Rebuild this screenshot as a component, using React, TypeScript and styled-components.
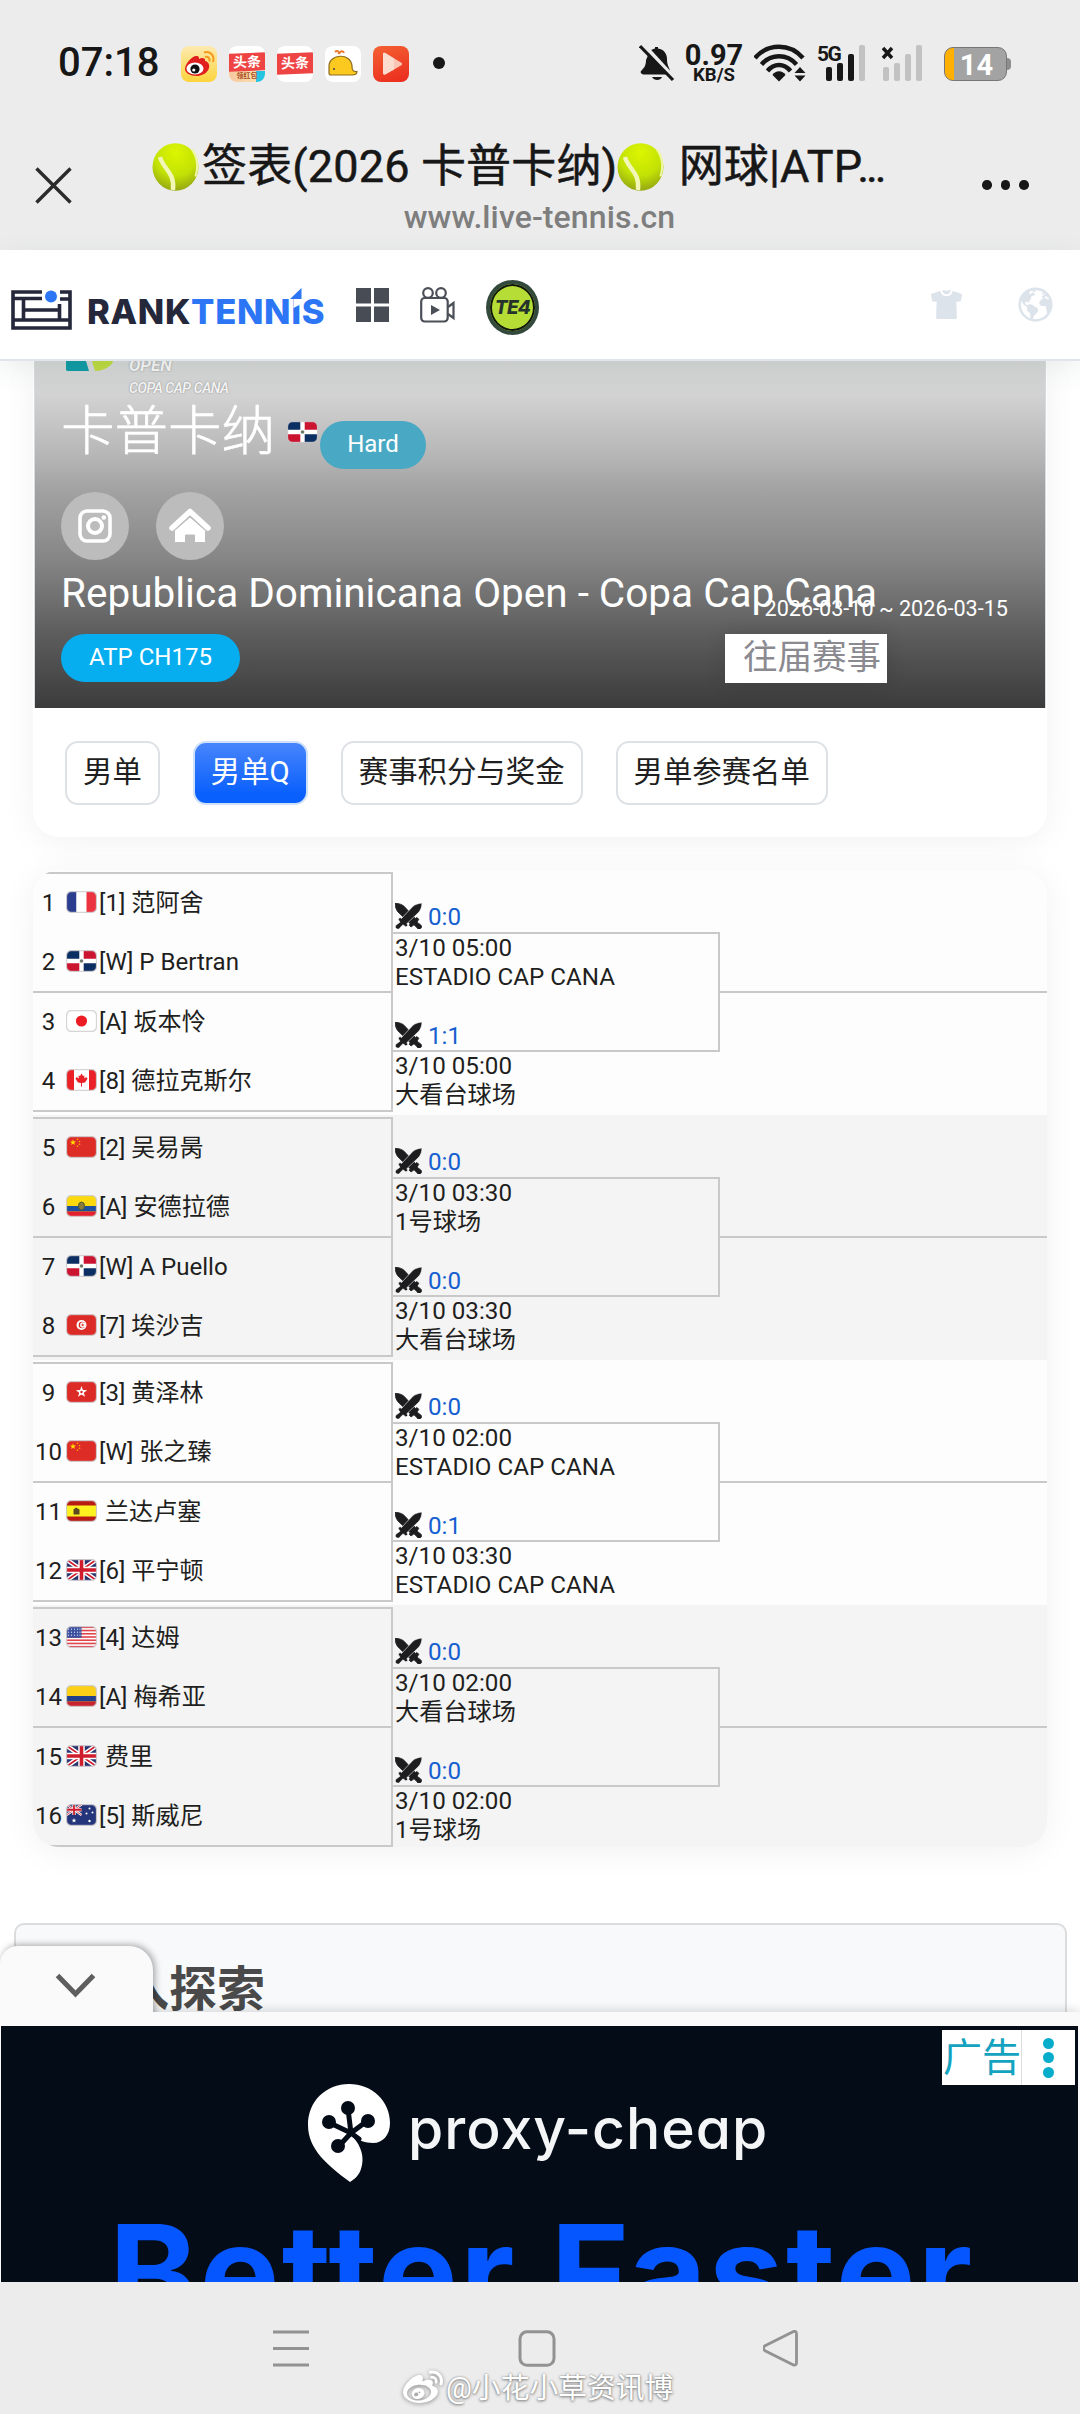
import React from "react";
import styled, { createGlobalStyle } from "styled-components";
import { FaWeibo } from "react-icons/fa";
import { IoEarth, IoShirt } from "react-icons/io5";

const sans = `Roboto, "Noto Sans CJK SC", sans-serif`;

const Global = createGlobalStyle`
  body { margin: 0; background: #fff; font-family: ${sans}; color: #1f1f21; }
  * { box-sizing: border-box; }
  svg { display: block; flex: none; }
`;

const Screen = styled.div`
  width: 1080px;
  height: 2414px;
  overflow: hidden;
  display: flex;
  flex-direction: column;
  background: #fff;
`;

/* ---------- system status bar ---------- */

const StatusBar = styled.div`
  height: 126px;
  flex: none;
  background: #ececec;
  display: flex;
  align-items: flex-start;
  padding: 0 73px 0 58px;
  color: #171717;
`;
const Clock = styled.div`
  width: 123px;
  padding-top: 39px;
  font-size: 40px;
  line-height: 47px;
  font-weight: 500;
`;
const AppIcons = styled.div`
  display: flex;
  gap: 12px;
  padding-top: 46px;
`;
const AppIcon = styled.div<{ $bg: string }>`
  width: 36px;
  height: 36px;
  border-radius: 8px;
  overflow: hidden;
  background: ${(p) => p.$bg};
`;
const HeadlineBand = styled.div<{ $promo?: boolean }>`
  margin-top: 7px;
  height: ${(p) => (p.$promo ? 18 : 21)}px;
  background: #ee4444;
  color: #fff;
  font-size: 14px;
  font-weight: 700;
  line-height: ${(p) => (p.$promo ? 18 : 21)}px;
  text-align: center;
  transform: skewY(-2deg);
`;
const PromoBand = styled.div`
  height: 12px;
  background: linear-gradient(90deg, #f6c8a0, #fbdcae 75%, #25c4e0 76%);
  color: #a8501c;
  font-size: 7px;
  font-weight: 700;
  line-height: 11px;
  text-align: center;
`;
const NotifDot = styled.div`
  width: 12px;
  height: 12px;
  border-radius: 50%;
  background: #171717;
  margin: 57px 0 0 24px;
`;
const StatusRight = styled.div`
  margin-left: auto;
  display: flex;
  padding-top: 44px;
`;
const Speed = styled.div`
  width: 60px;
  margin: -1px 10px 0 9px;
  text-align: center;
  font-weight: 700;
  line-height: 1;
`;
const SpeedValue = styled.div`
  font-size: 29px;
  line-height: 25px;
`;
const SpeedUnit = styled.div`
  font-size: 18.5px;
  line-height: 14px;
  font-weight: 700;
`;
const Signal = styled.div`
  position: relative;
  width: 50px;
  height: 38px;
`;
const SignalLabel = styled.span`
  position: absolute;
  left: 0;
  top: -2px;
  font-size: 21px;
  line-height: 24px;
  font-weight: 700;
  letter-spacing: -1.5px;
`;
const Battery = styled.div`
  position: relative;
  width: 63px;
  height: 34px;
  margin: 3px 0 0 20px;
  border: 1.5px solid #767676;
  border-radius: 9px;
  background: linear-gradient(90deg, #ffb000 9px, #a3a3a3 9px);
  color: #fff;
  font-size: 29px;
  font-weight: 700;
  line-height: 35px;
  text-align: center;
  padding-left: 2px;
  &::after {
    content: "";
    position: absolute;
    right: -5px;
    top: 10px;
    width: 4px;
    height: 12px;
    border-radius: 0 4px 4px 0;
    background: #8d8d8d;
  }
`;

/* ---------- browser title bar ---------- */

const TitleBar = styled.div`
  height: 124px;
  flex: none;
  background: #ececec;
  display: flex;
  align-items: flex-start;
  padding: 0 50px 0 35px;
`;
const CloseBox = styled.div`
  width: 117px;
  padding-top: 41px;
`;
const TitleText = styled.div`
  width: 775px;
  text-align: center;
`;
const PageTitle = styled.div`
  display: flex;
  align-items: center;
  height: 66px;
  padding-top: 15px;
  font-size: 45px;
  line-height: 54px;
  color: #171717;
  white-space: pre;
  -webkit-text-stroke: 0.5px #171717;
`;
const TitlePart = styled.span<{ $gap?: number }>`
  margin-left: ${(p) => p.$gap ?? 0}px;
  letter-spacing: 0.15px;
`;
const Ellipsis = styled.span`
  margin-left: -5px;
  letter-spacing: -3.2px;
`;
const PageUrl = styled.div`
  font-size: 32px;
  line-height: 38px;
  margin-top: 6px;
  font-weight: 500;
  letter-spacing: 0.1px;
  color: #7e7e7e;
`;
const MoreDots = styled.div`
  display: flex;
  gap: 9px;
  margin: 54px 0 0 55px;
  i {
    width: 9.5px;
    height: 9.5px;
    border-radius: 50%;
    background: #171717;
  }
`;

/* ---------- site header ---------- */

const SiteHeader = styled.header`
  height: 111px;
  flex: none;
  background: #fff;
  border-bottom: 2px solid #dfe5ea;
  display: flex;
  align-items: center;
  padding: 0 25px 0 11px;
  position: relative;
  z-index: 2;
  box-shadow: 0 8px 26px rgba(60, 80, 80, 0.1);
`;
const Court = styled.div`
  margin-top: 11px;
`;
const Brand = styled.div`
  position: relative;
  margin: 12px 0 0 15px;
  width: 242px;
  font-family: Inter, sans-serif;
  font-weight: 800;
  font-size: 34.6px;
  line-height: 40px;
  letter-spacing: 0.65px;
  color: #25273b;
  display: flex;
  span { color: #2c76f5; }
  svg { position: absolute; left: 203px; top: -3px; }
`;
const HeaderTools = styled.div`
  display: flex;
  align-items: center;
  margin-left: 27px;
  gap: 31px;
`;
const Te4 = styled.div`
  width: 53px;
  height: 55px;
  margin-top: 5px;
  border-radius: 50%;
  border: 4px solid #33493c;
  background: #b6dd35;
  box-shadow: inset 0 0 0 2px #10160c;
  color: #25332b;
  font: italic 800 19px/47px Inter, sans-serif;
  letter-spacing: -0.8px;
  text-align: center;
`;
const HeaderRight = styled.div`
  margin-left: auto;
  display: flex;
  align-items: center;
  gap: 53px;
  color: #dde3eb;
`;

/* ---------- page content ---------- */

const Content = styled.main`
  height: 1651px;
  flex: none;
  overflow: hidden;
  padding: 0 33px;
`;
const EventCard = styled.section`
  height: 476px;
  width: 1014px;
  border-radius: 0 0 26px 26px;
  background: #fff;
  box-shadow: 0 4px 34px rgba(0, 0, 0, 0.06);
`;
const Hero = styled.div`
  position: relative;
  height: 347px;
  margin: 0 1px;
  padding-left: 26px;
  border: solid #d5dce1;
  border-width: 0 1px;
  color: #fff;
  background: linear-gradient(180deg, #d5d8d7 0%, #d2d2d2 10%, #b4b4b4 28.5%, #a4a4a4 36%, #868686 57%, #5e5e5e 78%, #3b3b3b 100%);
`;
const LogoStrip = styled.div`
  height: 33px;
  display: flex;
  padding-left: 4px;
`;
const LogoText = styled.div`
  margin: -4px 0 0 14px;
  color: #f6f6f6;
  font-style: italic;
  text-shadow: 0 0 2px #888;
`;
const LogoOpen = styled.div`
  font-size: 17px;
  line-height: 17px;
  font-weight: 700;
`;
const LogoCopa = styled.div`
  font-size: 14px;
  line-height: 14px;
  margin-top: 7px;
  font-weight: 500;
  letter-spacing: -0.4px;
`;
const NameRow = styled.div`
  height: 98px;
  display: flex;
  align-items: flex-start;
`;
const CityName = styled.h1`
  margin: -1px 12px 0 1px;
  font-size: 53.5px;
  line-height: 78px;
  font-weight: 300;
  text-indent: -1px;
  -webkit-text-stroke: 0.6px #fff;
`;
const FlagSlot = styled.div`
  padding: 27px 2px 0 0;
`;
const Pill = styled.span<{ $bg: string; $w: number }>`
  display: block;
  width: ${(p) => p.$w}px;
  height: 48px;
  border-radius: 24px;
  background: ${(p) => p.$bg};
  font-size: 24px;
  line-height: 47px;
  text-align: center;
`;
const HardSlot = styled.div`
  padding-top: 27px;
`;
const Socials = styled.div`
  height: 68px;
  display: flex;
  gap: 27px;
`;
const SocialButton = styled.div`
  width: 68px;
  height: 68px;
  border-radius: 50%;
  background: #bcbcbc;
  display: grid;
  place-items: center;
`;
const EventTitle = styled.h2`
  margin: 0;
  height: 74px;
  font-size: 40.5px;
  font-weight: 400;
  line-height: 66px;
  white-space: nowrap;
`;
const EventDates = styled.div`
  position: absolute;
  right: 37px;
  top: 234px;
  font-size: 21.6px;
  line-height: 28px;
`;
const HeroFoot = styled.div`
  display: flex;
  justify-content: space-between;
  padding-right: 158px;
`;
const PastEvents = styled.div`
  width: 162px;
  height: 49px;
  padding-left: 18px;
  background: #fff;
  color: #8a8a90;
  font-size: 34.5px;
  line-height: 46px;
  white-space: nowrap;
  box-shadow: 0 0 20px rgba(0, 0, 0, 0.12);
`;
const Tabs = styled.nav`
  display: flex;
  gap: 33px;
  padding: 33px 0 0 32px;
`;
const Tab = styled.div<{ $active?: boolean }>`
  height: 64px;
  padding: 0 16px;
  border: 2px solid ${(p) => (p.$active ? "#cfe0fb" : "#dee2e6")};
  border-radius: 13px;
  font-size: 29.4px;
  line-height: 58px;
  white-space: nowrap;
  color: ${(p) => (p.$active ? "#fff" : "#1f1f21")};
  background: ${(p) => (p.$active ? "linear-gradient(180deg, #4785fb, #0a60fd 85%)" : "#fff")};
`;

/* ---------- draw ---------- */

const DrawCard = styled.section`
  width: 1014px;
  margin-top: 33px;
  border-radius: 26px;
  overflow: hidden;
`;
const DrawShadow = styled.div`
  border-radius: 26px;
  box-shadow: 0 4px 34px rgba(0, 0, 0, 0.06);
`;
const Quarter = styled.div<{ $odd: boolean; $last: boolean }>`
  display: grid;
  grid-template-columns: 360px 327px 1fr;
  height: ${(p) => (p.$last ? 242 : 245)}px;
  padding-top: 2px;
  background: ${(p) => (p.$odd ? "#f4f4f4" : "#fdfdfd")};
`;
const line = "2px solid #c9c9c9";
const Players = styled.div`
  height: 240px;
  border: ${line};
  border-left: none;
`;
const Pair = styled.div`
  height: 117px;
  & + & {
    height: 119px;
    border-top: ${line};
  }
`;
const Player = styled.div`
  height: 58.5px;
  display: flex;
  align-items: center;
  font-size: 24.1px;
  line-height: 28px;
  white-space: pre;
`;
const Seat = styled.span`
  width: 31px;
  text-align: center;
`;
const PlayerFlag = styled.span`
  margin: 0 2px 2px 2px;
`;
const Matches = styled.div`
  height: 240px;
  display: flex;
  flex-direction: column;
`;
const ScoreRow = styled.div<{ $first?: boolean }>`
  height: ${(p) => (p.$first ? 60 : 58)}px;
  display: flex;
  align-items: flex-end;
  gap: 6px;
  padding: 0 0 ${(p) => (p.$first ? 1 : 0)}px 2px;
  color: #165fd0;
  font-size: 24.2px;
  line-height: 28px;
  svg { margin-bottom: 2px; }
`;
const Bracket = styled.div`
  height: 120px;
  border: ${line};
  border-left: none;
`;
const Info = styled.div`
  padding-left: 2px;
  font-size: 24.2px;
  line-height: 29px;
  height: 58px;
  white-space: nowrap;
`;
const NextRound = styled.div`
  height: 121px;
  border-bottom: ${line};
`;

/* ---------- explore panel ---------- */

const Explore = styled.section`
  width: 1053px;
  height: 200px;
  margin: 76px 0 0 -19px;
  border: 2px solid #dadcde;
  border-radius: 10px;
  background: #f8f9fb;
  padding: 29px 0 0 57px;
  font-size: 48px;
  line-height: 72px;
  font-weight: 700;
  color: #4a4a4a;
`;

/* ---------- advertisement ---------- */

const AdDock = styled.aside`
  position: relative;
  z-index: 3;
  flex: none;
  height: 270px;
  padding: 14px 2px 0 1px;
  background: #fafafa;
  box-shadow: 0 -2px 10px rgba(0, 0, 0, 0.14);
`;
const AdHandle = styled.div`
  position: absolute;
  left: 0;
  top: -66px;
  width: 153px;
  height: 80px;
  padding: 26px 0 0 55px;
  background: #fafafa;
  border-radius: 18px 24px 0 0;
  box-shadow: 2px -1px 7px rgba(0, 0, 0, 0.35);
  clip-path: inset(-10px -14px 14px 0);
`;
const Ad = styled.div`
  position: relative;
  height: 256px;
  overflow: hidden;
  background: #040c18;
`;
const AdBadge = styled.div`
  position: absolute;
  right: 3px;
  top: 4px;
  width: 133px;
  height: 55px;
  display: flex;
  background: #fff;
`;
const AdLabel = styled.div`
  width: 80px;
  border-right: 1px solid #dcdcdc;
  padding-left: 1px;
  color: #14a3bf;
  font-size: 39px;
  line-height: 56px;
  white-space: nowrap;
`;
const AdMenu = styled.div`
  flex: 1;
  display: flex;
  flex-direction: column;
  align-items: center;
  justify-content: center;
  gap: 3.5px;
  i {
    width: 11px;
    height: 11px;
    border-radius: 50%;
    background: #05adcb;
  }
`;
const AdBrand = styled.div`
  display: flex;
  align-items: flex-start;
  padding: 57px 0 0 306px;
  color: #f4f5f6;
`;
const AdName = styled.div`
  margin: 12px 0 0 17px;
  font-family: Inter, sans-serif;
  font-weight: 500;
  font-size: 57px;
  line-height: 68px;
  letter-spacing: 1px;
  white-space: nowrap;
  font-feature-settings: "cv11";
`;
const AdHeadline = styled.div`
  position: absolute;
  left: 108px;
  top: 166px;
  font-family: Inter, sans-serif;
  font-weight: 700;
  font-size: 134px;
  line-height: 160px;
  letter-spacing: 2.1px;
  color: #0656ff;
  white-space: nowrap;
`;

/* ---------- system navigation ---------- */

const NavBar = styled.footer`
  position: relative;
  z-index: 3;
  height: 132px;
  flex: none;
  background: #ececec;
  padding-top: 48px;
`;
const NavButtons = styled.div`
  display: flex;
  padding-left: 272px;
  height: 39px;
`;
const NavSlot = styled.div`
  width: 245.5px;
`;
const Watermark = styled.div`
  display: flex;
  align-items: center;
  gap: 3px;
  padding-left: 403px;
  height: 38px;
  color: #fff;
  font-size: 28.8px;
  line-height: 38px;
  text-shadow: 0 1px 3px #777, 0 0 2px #999;
  svg { filter: drop-shadow(0 1px 2px #888); }
`;

/* ---------- drawings ---------- */

const TennisBall = () => (
  <svg width="47" height="48" viewBox="0 0 47 48">
    <defs>
      <radialGradient id="ball" cx="0.5" cy="0.2" r="0.8">
        <stop offset="0" stopColor="#dcf500" />
        <stop offset="0.6" stopColor="#c3e205" />
        <stop offset="1" stopColor="#95a812" />
      </radialGradient>
    </defs>
    <ellipse cx="23.5" cy="24" rx="23" ry="23.7" fill="url(#ball)" />
    <path d="M8 14c3 12 15 15 13 33" fill="none" stroke="#f2f7b8" strokeWidth="4.4" />
    <path d="M40 6.500c5 7 6.500 17 3.500 27" fill="none" stroke="#eef6a0" strokeWidth="2.200" />
  </svg>
);

const blade =
  "M27 0C23 .5 20 1.500 18 3.200L6.500 15.500 5 14.500 3.200 16.300 5 19.200 1.500 21.700C0 22.800 0 24.600 1.300 25.500 3 26.700 4.500 26 5.200 24.500L8 21.800 11 24 12.800 22.200 11.800 20.700 24 9C26 6.500 26.800 3.500 27 0z";

const Swords = () => (
  <svg width="27" height="26" viewBox="0 0 27 26" fill="#1d1d1f">
    <path d={blade} stroke="#1d1d1f" strokeWidth="0.8" transform="translate(27 0) scale(-1 1)" />
    <path d={blade} stroke="#f8f8f8" strokeWidth="0.6" />
  </svg>
);

const UnionJack = () => (
  <g>
    <rect width="30" height="21" fill="#27356f" />
    <path d="M0 0l30 21M30 0L0 21" stroke="#fff" strokeWidth="4.500" />
    <path d="M0 0l30 21M30 0L0 21" stroke="#cf1b2b" strokeWidth="1.600" />
    <path d="M15 0v21M0 10.500h30" stroke="#fff" strokeWidth="6.500" />
    <path d="M15 0v21M0 10.500h30" stroke="#cf1b2b" strokeWidth="3.600" />
  </g>
);

const star = (x: number, y: number, r: number) => {
  const pts: string[] = [];
  for (let i = 0; i < 10; i++) {
    const a = (Math.PI * i) / 5 - Math.PI / 2;
    const q = i % 2 ? r * 0.4 : r;
    pts.push(`${x + q * Math.cos(a)},${y + q * Math.sin(a)}`);
  }
  return pts.join(" ");
};

const flags: Record<string, React.ReactNode> = {
  fr: <><rect width="10" height="21" fill="#2b3d8f" /><rect x="10" width="10" height="21" fill="#fff" /><rect x="20" width="10" height="21" fill="#ec3340" /></>,
  do: <><rect width="30" height="21" fill="#fff" /><path d="M0 0h12.800v8.300H0zM17.200 12.700H30V21H17.200z" fill="#0b2f63" /><path d="M17.200 0H30v8.300H17.200zM0 12.700h12.800V21H0z" fill="#cb1430" /><circle cx="15" cy="10.500" r="1.800" fill="#6b7a6a" /></>,
  jp: <><rect width="30" height="21" fill="#fff" /><circle cx="15" cy="10.500" r="5.600" fill="#ed1c24" /></>,
  ca: <><rect width="30" height="21" fill="#fff" /><path d="M0 0h7.500v21H0zM22.500 0H30v21h-7.500z" fill="#ea2127" /><path d="M15 4l1.500 2.600 1.500-.5-.4 3 2.200-1.600 1.200 1.800-2.500 3.800-3 .5V17h-1v-3.400l-3-.5L9 9.300l1.200-1.800L12.400 9.100l-.4-3 1.500.5z" fill="#ea2127" /></>,
  cn: <><rect width="30" height="21" fill="#dd2c26" /><polygon points={star(6.500, 6, 3.200)} fill="#ffde00" /><g fill="#ffb400"><circle cx="11" cy="2.800" r=".8" /><circle cx="13" cy="5" r=".8" /><circle cx="13" cy="7.800" r=".8" /><circle cx="11" cy="9.800" r=".8" /></g></>,
  ec: <><rect width="30" height="21" fill="#fbd90d" /><rect y="10.500" width="30" height="5.500" fill="#1c4fa0" /><rect y="16" width="30" height="5" fill="#e4202e" /><ellipse cx="15" cy="10.500" rx="3" ry="4" fill="#8a7a3c" stroke="#4d5a30" /></>,
  tn: <><rect width="30" height="21" fill="#dc2a26" /><circle cx="15" cy="10.500" r="5" fill="#fff" /><circle cx="15.500" cy="10.500" r="3.300" fill="#dc2a26" /><circle cx="16.300" cy="10.500" r="2.700" fill="#fff" /><polygon points={star(16.200, 10.500, 1.900)} fill="#dc2a26" /></>,
  hk: <><rect width="30" height="21" fill="#dc2a26" /><polygon points={star(15, 10.500, 6)} fill="#fff" /><circle cx="15" cy="10.500" r="1.200" fill="#dc2a26" /></>,
  es: <><rect width="30" height="21" fill="#b81a14" /><rect y="5" width="30" height="11" fill="#fcf21f" /><path d="M7 14V9l2.500-2L13 9v5z" fill="#5b4a20" /></>,
  gb: <UnionJack />,
  us: <><rect width="30" height="21" fill="#fff" />{[0, 2, 4, 6, 8, 10, 12].map((i) => <rect key={i} y={(i * 21) / 13} width="30" height={21 / 13} fill="#e0454e" />)}<rect width="15" height="11.300" fill="#3b519e" />{[2, 5, 8, 11, 13.500].map((x) => [2, 5, 8].map((y) => <circle key={x + "-" + y} cx={x} cy={y + 0.700} r=".6" fill="#dfe4f5" />))}</>,
  co: <><rect width="30" height="21" fill="#fbd016" /><rect y="10.500" width="30" height="5.500" fill="#22408c" /><rect y="16" width="30" height="5" fill="#ca2330" /></>,
  au: <><rect width="30" height="21" fill="#24357c" /><g transform="scale(.5)"><UnionJack /></g><g fill="#fff"><polygon points={star(7.500, 16, 2.600)} /><circle cx="23" cy="4" r="1" /><circle cx="20" cy="9" r="1" /><circle cx="26" cy="8" r="1" /><circle cx="23" cy="16.500" r="1.200" /></g></>,
};

const Flag = ({ code }: { code: string }) => (
  <svg width="31" height="22" viewBox="-0.5 -0.5 31 22">
    <defs>
      <clipPath id={`r-${code}`}><rect width="30" height="21" rx="5" /></clipPath>
    </defs>
    <g clipPath={`url(#r-${code})`}>{flags[code]}</g>
    <rect x="0" y="0" width="30" height="21" rx="5" fill="none" stroke="#c9c5c8" strokeOpacity=".75" strokeWidth="1.300" />
  </svg>
);

const Bars = ({ lit }: { lit: number }) => (
  <svg width="50" height="38" viewBox="0 0 50 38">
    {[[9, 23], [20, 19], [31, 10], [42, 1]].map(([x, y], i) => (
      <rect key={x} x={x} y={y} width="6" height={37 - y} rx="2" fill={i < lit ? "#171717" : "#c2c2c2"} />
    ))}
  </svg>
);

/* ---------- data ---------- */

type P = { seat: number; flag: string; name: string };
type M = { score: string; time: string; court: string };
const p = (seat: number, flag: string, name: string): P => ({ seat, flag, name });
const m = (score: string, time: string, court: string): M => ({ score, time, court });

const quarters: { players: P[]; matches: M[] }[] = [
  {
    players: [p(1, "fr", "[1] 范阿舍"), p(2, "do", "[W] P Bertran"), p(3, "jp", "[A] 坂本怜"), p(4, "ca", "[8] 德拉克斯尔")],
    matches: [m("0:0", "3/10 05:00", "ESTADIO CAP CANA"), m("1:1", "3/10 05:00", "大看台球场")],
  },
  {
    players: [p(5, "cn", "[2] 吴易昺"), p(6, "ec", "[A] 安德拉德"), p(7, "do", "[W] A Puello"), p(8, "tn", "[7] 埃沙吉")],
    matches: [m("0:0", "3/10 03:30", "1号球场"), m("0:0", "3/10 03:30", "大看台球场")],
  },
  {
    players: [p(9, "hk", "[3] 黄泽林"), p(10, "cn", "[W] 张之臻"), p(11, "es", " 兰达卢塞"), p(12, "gb", "[6] 平宁顿")],
    matches: [m("0:0", "3/10 02:00", "ESTADIO CAP CANA"), m("0:1", "3/10 03:30", "ESTADIO CAP CANA")],
  },
  {
    players: [p(13, "us", "[4] 达姆"), p(14, "co", "[A] 梅希亚"), p(15, "gb", " 费里"), p(16, "au", "[5] 斯威尼")],
    matches: [m("0:0", "3/10 02:00", "大看台球场"), m("0:0", "3/10 02:00", "1号球场")],
  },
];

const PlayerRow = ({ player }: { player: P }) => (
  <Player>
    <Seat>{player.seat}</Seat>
    <PlayerFlag><Flag code={player.flag} /></PlayerFlag>
    {player.name}
  </Player>
);

const MatchInfo = ({ match }: { match: M }) => (
  <Info>
    <div>{match.time}</div>
    <div>{match.court}</div>
  </Info>
);

const WifiSlot = styled.div`
  margin-right: 11px;
`;
const NoSim = styled.svg`
  position: absolute;
  left: 7px;
  top: 2px;
`;
const SimGap = styled.div`
  width: 7px;
`;

export default function App() {
  return (
    <Screen>
      <Global />
      <StatusBar>
        <Clock>07:18</Clock>
        <AppIcons>
          <AppIcon $bg="linear-gradient(180deg, #fdeab0, #fdd43c)">
            <svg width="36" height="36" viewBox="0 0 36 36">
              <path d="M4 23c0-6 8-14 12-13 2 0 2 2 2 3 3-2 7-1 6 2 7 1 6 14-8 15-7 0-12-3-12-7z" fill="#e01f1f" />
              <ellipse cx="14" cy="22.500" rx="8.500" ry="6" fill="#fff" />
              <circle cx="14" cy="23" r="4.600" fill="#111" />
              <circle cx="12.800" cy="24" r="1.600" fill="#fff" />
              <path d="M24 11c3-1 5 1 4.500 4.500M23 6.500c6-2 11 3 9 9.500" fill="none" stroke="#f39a1f" strokeWidth="2" />
            </svg>
          </AppIcon>
          <AppIcon $bg="#fff">
            <HeadlineBand $promo>头条</HeadlineBand>
            <PromoBand>领红包</PromoBand>
          </AppIcon>
          <AppIcon $bg="#fff">
            <HeadlineBand>头条</HeadlineBand>
          </AppIcon>
          <AppIcon $bg="#fff">
            <svg width="36" height="36" viewBox="0 0 36 36">
              <path d="M4 27V20c0-12 22-14 23 0 0 4 1 6 5 5.500 0 3-2 3.500-5 3.500H6c-1.500 0-2-1-2-2z" fill="#fbc91f" stroke="#8c6a20" strokeWidth="1.200" />
              <circle cx="9" cy="23" r="1" fill="#444" />
              <path d="M10 6c2-2 4-1 4 2 1-3 4-4 5-1" fill="none" stroke="#ec7a2c" strokeWidth="2" />
            </svg>
          </AppIcon>
          <AppIcon $bg="linear-gradient(160deg, #f46233, #ea2a1d)">
            <svg width="36" height="36" viewBox="0 0 36 36">
              <path d="M10 8.500c0-2 1.500-2 3-1l15 9c1.500 1 1.500 2 0 3L13 28c-1.500 1-3 .5-3-1z" fill="#fbc4b4" />
              <path d="M10 8.500c0-2 1.500-2 3-1l8 5v11L13 28c-1.500 1-3 .5-3-1z" fill="#fcdccf" />
            </svg>
          </AppIcon>
        </AppIcons>
        <NotifDot />
        <StatusRight>
          <svg width="36" height="38" viewBox="0 0 36 38">
            <path d="M10 9c1.500-3 4-4 6-4.500V3h3v1.500c6 1 9 5 9 11 0 7 3 8 4 15H4c-2-1-3-2-2-3.500 3-3 5-5 5-11z" fill="#171717" />
            <path d="M13 33h10c-1.500 4-8 4-10 0z" fill="#171717" />
            <path d="M4 0l33 36" stroke="#ececec" strokeWidth="4" />
            <path d="M1 2l33 34" stroke="#171717" strokeWidth="3.200" />
          </svg>
          <Speed>
            <SpeedValue>0.97</SpeedValue>
            <SpeedUnit>KB/S</SpeedUnit>
          </Speed>
          <WifiSlot>
            <svg width="52" height="38" viewBox="0 0 52 38" fill="none" stroke="#171717" strokeWidth="4.400">
              <path d="M1 14C14-1 36-1 49 14" />
              <path d="M7.500 20.500C17 9.500 33 9.500 42.500 20.500" />
              <path d="M13.500 27C20 19 30 19 36.500 27" />
              <path d="M18.500 31c3-5 10-5 13 0L25 37.500z" fill="#171717" stroke="none" />
              <path d="M46 23l5.500 6h-11zM46 37.500l5.500-6h-11z" fill="#171717" stroke="none" />
            </svg>
          </WifiSlot>
          <Signal>
            <SignalLabel>5G</SignalLabel>
            <Bars lit={3} />
          </Signal>
          <SimGap />
          <Signal>
            <NoSim width="14" height="14" viewBox="0 0 14 14">
              <path d="M2 2l9 10M11 2L2 12" stroke="#171717" strokeWidth="3.400" />
            </NoSim>
            <Bars lit={0} />
          </Signal>
          <Battery>14</Battery>
        </StatusRight>
      </StatusBar>

      <TitleBar>
        <CloseBox>
          <svg width="37" height="37" viewBox="0 0 37 37"><path d="M1.500 1.500l34 34M35.500 1.500l-34 34" stroke="#2b2b2b" strokeWidth="3.400" /></svg>
        </CloseBox>
        <TitleText>
          <PageTitle>
            <TennisBall />
            <TitlePart $gap={3}>签表(2026 卡普卡纳)</TitlePart>
            <TennisBall />
            <TitlePart $gap={3}>{" 网球|ATP"}</TitlePart>
            <Ellipsis>...</Ellipsis>
          </PageTitle>
          <PageUrl>www.live-tennis.cn</PageUrl>
        </TitleText>
        <MoreDots><i /><i /><i /></MoreDots>
      </TitleBar>

      <SiteHeader>
        <Court>
          <svg width="61" height="40" viewBox="0 0 61 40" fill="none" stroke="#25273b" strokeWidth="3.600">
            <path d="M31 2H2v36h57V2H49M31 8.500H2M49 9h10M12.500 8.500V30M48.500 14v16M12.500 20h36M2 30h57" />
            <circle cx="40" cy="6.500" r="6" fill="#2c76f5" stroke="none" />
          </svg>
        </Court>
        <Brand>
          RANK<span>TENNIS</span>
          <svg width="13" height="22" viewBox="0 0 13 22"><path d="M3.500 11H13v4L3.500 20z" fill="#fff" /><path d="M0 11L11.500 0v11z" fill="#2c76f5" /></svg>
        </Brand>
        <HeaderTools>
          <svg width="33" height="34" viewBox="0 0 33 34" fill="#474c55">
            <path d="M0 0h15v15.500H0zM18 0h15v15.500H18zM0 18.500h15V34H0zM18 18.500h15V34H18z" />
          </svg>
          <svg width="35" height="36" viewBox="0 0 35 36" fill="none" stroke="#4b4f57" strokeWidth="2.200">
            <circle cx="8" cy="6" r="4.800" />
            <circle cx="21" cy="6" r="4.800" />
            <rect x="1.200" y="11" width="26.500" height="23.500" rx="3.500" />
            <path d="M28 20l5.500-4v15L28 27" />
            <path d="M11 18l9 5-9 5z" fill="#4b4f57" stroke="none" />
          </svg>
          <Te4>TE4</Te4>
        </HeaderTools>
        <HeaderRight>
          <IoShirt size={33} />
          <IoEarth size={39} />
        </HeaderRight>
      </SiteHeader>

      <Content>
        <EventCard>
          <Hero>
            <LogoStrip>
              <svg width="50" height="12" viewBox="0 0 50 12">
                <path d="M1 0h20l3 10H3c-2 0-2-1-2-2z" fill="#0f9ba6" />
                <path d="M27 0h21c0 4-9 10-18 10z" fill="#bddb3f" />
              </svg>
              <LogoText>
                <LogoOpen>OPEN</LogoOpen>
                <LogoCopa>COPA CAP CANA</LogoCopa>
              </LogoText>
            </LogoStrip>
            <NameRow>
              <CityName>卡普卡纳</CityName>
              <FlagSlot><Flag code="do" /></FlagSlot>
              <HardSlot><Pill $bg="#49a8c4" $w={106}>Hard</Pill></HardSlot>
            </NameRow>
            <Socials>
              <SocialButton>
                <svg width="34" height="34" viewBox="0 0 34 34" fill="none" stroke="#fff" strokeWidth="3.600">
                  <rect x="2" y="2" width="30" height="30" rx="7" />
                  <circle cx="17" cy="17" r="7" strokeWidth="4" />
                  <circle cx="25.800" cy="8.500" r="2.300" fill="#fff" stroke="none" />
                </svg>
              </SocialButton>
              <SocialButton>
                <svg width="42" height="36" viewBox="0 0 42 36" fill="#fff">
                  <path d="M3 20L21 3.500 39 20" fill="none" stroke="#fff" strokeWidth="5.500" strokeLinecap="round" strokeLinejoin="round" />
                  <path d="M5.500 22.500L21 9l15.500 13.500V33c0 1-.5 1.500-1.500 1.500h-9.500V27h-9v7.500H7c-1 0-1.500-.5-1.500-1.500z" stroke="#bcbcbc" strokeWidth="1" />
                </svg>
              </SocialButton>
            </Socials>
            <EventTitle>Republica Dominicana Open - Copa Cap Cana</EventTitle>
            <EventDates>2026-03-10 ~ 2026-03-15</EventDates>
            <HeroFoot>
              <Pill $bg="#06aef0" $w={179}>ATP CH175</Pill>
              <PastEvents>往届赛事</PastEvents>
            </HeroFoot>
          </Hero>
          <Tabs>
            <Tab>男单</Tab>
            <Tab $active>男单Q</Tab>
            <Tab>赛事积分与奖金</Tab>
            <Tab>男单参赛名单</Tab>
          </Tabs>
        </EventCard>

        <DrawShadow>
          <DrawCard>
            {quarters.map((q, i) => (
              <Quarter key={i} $odd={i % 2 === 1} $last={i === 3}>
                <Players>
                  <Pair><PlayerRow player={q.players[0]} /><PlayerRow player={q.players[1]} /></Pair>
                  <Pair><PlayerRow player={q.players[2]} /><PlayerRow player={q.players[3]} /></Pair>
                </Players>
                <Matches>
                  <ScoreRow $first><Swords />{q.matches[0].score}</ScoreRow>
                  <Bracket>
                    <MatchInfo match={q.matches[0]} />
                    <ScoreRow><Swords />{q.matches[1].score}</ScoreRow>
                  </Bracket>
                  <MatchInfo match={q.matches[1]} />
                </Matches>
                <NextRound />
              </Quarter>
            ))}
          </DrawCard>
        </DrawShadow>

        <Explore>深入探索</Explore>
      </Content>

      <AdDock>
        <AdHandle>
          <svg width="41" height="28" viewBox="0 0 41 28"><path d="M2.500 3.500L20.500 22 38.500 3.500" fill="none" stroke="#5e5e5e" strokeWidth="5" /></svg>
        </AdHandle>
        <Ad>
          <AdBrand>
            <svg width="84" height="99" viewBox="0 0 84 99">
              <path d="M42 1C65 1 83 18 83 40c0 12-7 20-17 20-8 0-14-3-20-6 8 9 12 20 8 32-2 6-6 10-11 13C20 82 1 66 1 42 1 18 19 1 42 1z" fill="#fff" />
              <g stroke="#040c18" strokeWidth="5" fill="#040c18" strokeLinecap="round">
                <path d="M44 50L41 26M44 50L23 40M44 50L60 38M44 50L32 63M44 50l8 6" />
                <circle cx="41" cy="25" r="4.500" /><circle cx="22" cy="39" r="4.500" /><circle cx="61" cy="38" r="4.500" /><circle cx="31" cy="63" r="4.500" />
              </g>
            </svg>
            <AdName>proxy-cheap</AdName>
          </AdBrand>
          <AdHeadline>Better Faster</AdHeadline>
          <AdBadge>
            <AdLabel>广告</AdLabel>
            <AdMenu><i /><i /><i /></AdMenu>
          </AdBadge>
        </Ad>
      </AdDock>

      <NavBar>
        <NavButtons>
          <NavSlot>
            <svg width="38" height="37" viewBox="0 0 38 37"><path d="M1 2h36M1 18.500h36M1 35h36" stroke="#929292" strokeWidth="3" /></svg>
          </NavSlot>
          <NavSlot>
            <svg width="38" height="37" viewBox="0 0 38 37"><rect x="2" y="1.800" width="34" height="33.500" rx="7" fill="none" stroke="#929292" strokeWidth="3" /></svg>
          </NavSlot>
          <svg width="36" height="37" viewBox="0 0 36 37"><path d="M2 16L30 2c2-1 3.500 0 3.500 2v29c0 2-1.500 3-3.500 2L2 21c-2-1.500-2-3.500 0-5z" fill="none" stroke="#929292" strokeWidth="2.800" transform="translate(0 -.3)" /></svg>
        </NavButtons>
        <Watermark>
          <FaWeibo size={40} />
          <span>@小花小草资讯博</span>
        </Watermark>
      </NavBar>
    </Screen>
  );
}
